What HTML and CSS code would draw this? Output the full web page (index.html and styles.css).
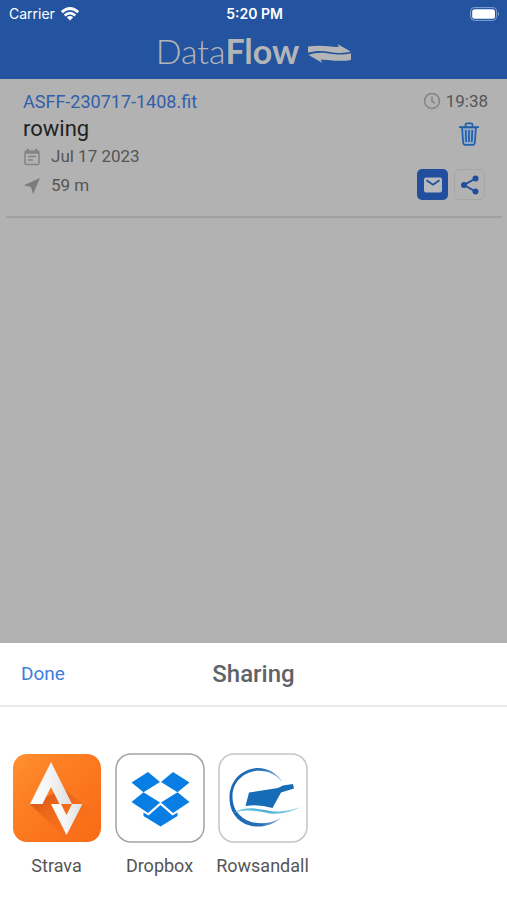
FILE: index.html
```html
<!DOCTYPE html>
<html lang="en">
<head>
<meta charset="utf-8">
<meta name="viewport" content="width=device-width, initial-scale=1">
<title>DataFlow</title>
<link rel="stylesheet" href="styles.css">
</head>
<body>
<header class="top">
  <div class="status">
    <div class="carrier">Carrier
      <svg width="18" height="14" viewBox="0 0 18 14" fill="none" stroke="#fff" stroke-width="2.7"><path d="M.8 5.200Q9-2.200 17.200 5.200M3.700 8.500Q9 3.700 14.300 8.500"/><path d="M9 13.600L5.800 10.300Q9 7.600 12.200 10.300Z" fill="#fff" stroke="none"/></svg>
    </div>
    <div class="clock">5:20 PM</div>
    <div class="power">
      <svg width="30" height="14" viewBox="0 0 30 14"><rect x=".6" y=".6" width="26" height="12.800" rx="4" fill="none" stroke="#86a4d2"/><rect x="2.200" y="2.200" width="22.800" height="9.600" rx="2.500" fill="#fff"/><path d="M28 4.800q2 2.200 0 4.400z" fill="#86a4d2"/></svg>
    </div>
  </div>
  <h1 class="brand"><span>Data<b>Flow</b></span>
    <svg width="43" height="19" viewBox="0 0 43 19" fill="#b4b5b7"><path d="M0 2.600C8 1.200 16 1.600 23 2.600Q27 3.200 31 2.800L29.500 0L42.500 7.600C36 9.800 28 9 22 8C14 6.600 7 6.600 0 8.800Z"/><path d="M43 9.200V16C35 17.400 27 16.800 20 15.900Q16 15.500 12.500 15.800L14.500 18.900L.5 11C7 8.400 14 8.200 21 9.400C28 10.600 36 11.200 43 9.200Z"/></svg>
  </h1>
</header>

<main class="page">
  <article class="activity">
    <div class="details">
      <a class="file" href="#">ASFF-230717-1408.fit</a>
      <h2 class="sport">rowing</h2>
      <p class="meta">
        <svg width="18" height="18" viewBox="0 0 18 18" fill="none" stroke="#838383" stroke-width="1.500"><rect x="2" y="3" width="14" height="13.500" rx="1.500"/><path d="M2 4.800h14M5 .8v3M13 .8v3" stroke-width="2"/><path d="M5 8.500h8M5 12h5"/></svg>
        Jul 17 2023</p>
      <p class="meta">
        <svg width="18" height="18" viewBox="0 0 18 18" fill="#7c7c7c"><path d="M17 1L.8 8.300L8 10L10 17.300Z"/></svg>
        59 m</p>
    </div>
    <div class="side">
      <p class="time">
        <svg width="18" height="18" viewBox="0 0 18 18" fill="none" stroke="#838383" stroke-width="1.500"><circle cx="9" cy="9" r="7.500"/><path d="M9 4.500V9.300L12.200 11.200"/></svg>
        19:38</p>
      <button class="trash" aria-label="Delete">
        <svg width="20" height="24" viewBox="0 0 20 24" fill="none" stroke="#2160ac" stroke-width="1.700"><path d="M3 5.500L4.200 21Q4.400 22.800 6 22.800H14Q15.600 22.800 15.800 21L17 5.500Z" fill="#91aac8"/><path d="M0 5.200H20M6.500 5V2.700Q6.500 1.400 8 1.400H12Q13.500 1.400 13.500 2.700V5M10 8V20M6.700 8L7.200 20M13.300 8L12.800 20"/></svg>
      </button>
      <div class="actions">
        <button class="square mail" aria-label="Email">
          <svg width="20" height="16" viewBox="0 0 20 16"><rect x="1" y=".5" width="18" height="15" rx="2" fill="#b7b9bd"/><path d="M3.500 3.200L10 7.700L16.500 3.200" fill="none" stroke="#214f9d" stroke-width="1.800"/></svg>
        </button>
        <button class="square share" aria-label="Share">
          <svg width="20" height="20" viewBox="0 0 20 20" fill="#214f9d"><path d="M15.500 3.500L4 10L15.500 16.500" fill="none" stroke="#214f9d" stroke-width="2"/><circle cx="15.500" cy="3.500" r="3"/><circle cx="4" cy="10" r="3"/><circle cx="15.500" cy="16.500" r="3"/></svg>
        </button>
      </div>
    </div>
  </article>
</main>

<section class="sheet" aria-labelledby="sheet-title">
  <div class="sheet-head">
    <button class="done">Done</button>
    <h2 class="sheet-title" id="sheet-title">Sharing</h2>
  </div>
  <div class="apps">
    <button class="app">
      <svg width="90" height="90" viewBox="0 0 90 90"><defs><linearGradient id="orange" x1="0" y1="0" x2="1" y2="1"><stop offset="0" stop-color="#ff9130"/><stop offset=".4" stop-color="#fc7c22"/><stop offset="1" stop-color="#fa6a16"/></linearGradient><linearGradient id="cast" x1="0" y1="0" x2="1" y2="1"><stop offset=".1" stop-color="#c94a12" stop-opacity=".75"/><stop offset=".8" stop-color="#f96a17" stop-opacity="0"/></linearGradient><linearGradient id="silver" x1="0" x2="1"><stop offset="0" stop-color="#fff"/><stop offset=".5" stop-color="#f4f4f4"/><stop offset="1" stop-color="#ddd"/></linearGradient></defs><rect x="1" y="1" width="88" height="88" rx="14" fill="url(#orange)"/><path d="M18 51L49 81L58 88H75L89 74V66L71 51L52 36Z" fill="url(#cast)"/><path d="M18 51L39 9L60 51H47.500L39 34L30.500 51Z" fill="url(#silver)"/><path d="M39 51H49L54.500 62L60 51H70.500L54.500 82Z" fill="url(#silver)"/></svg>
      <span>Strava</span>
    </button>
    <button class="app">
      <svg width="90" height="90" viewBox="0 0 90 90"><rect x="1" y="1" width="88" height="88" rx="15" fill="#fff" stroke="#a5a5a5" stroke-width="1.500"/><g fill="#087ee5"><path d="M33 19L45 29L28.500 39.200L16.500 29.500Z"/><path d="M58 19L46 29L62.500 39.200L74.500 29.500Z"/><path d="M28.500 39.200L45 49.500L33 60L16.500 49Z"/><path d="M62.500 39.200L74.500 49L58 60L46 49.500Z"/><path d="M28.500 59.500L33.500 62.500L45.500 52L57.500 62.500L62.500 59.500V63L45.500 73.500L28.500 63Z"/></g></svg>
      <span>Dropbox</span>
    </button>
    <button class="app">
      <svg width="90" height="90" viewBox="0 0 90 90"><defs><linearGradient id="ring" x1="0" x2="1"><stop offset="0" stop-color="#1865b4"/><stop offset=".6" stop-color="#2872b9"/><stop offset="1" stop-color="#9ebedf"/></linearGradient><linearGradient id="wave" x1="0" x2="1"><stop offset="0" stop-color="#79cce7"/><stop offset=".5" stop-color="#4caed5"/><stop offset="1" stop-color="#a5dceb"/></linearGradient></defs><rect x="1" y="1" width="88" height="88" rx="15" fill="#fff" stroke="#c5c5c5" stroke-width="1.500"/><path d="M65 30C50 4 12 14 11.500 44C11 73 43 82 63 65C42 77 14 68 14.500 43C15 18 48 8 65 30Z" fill="url(#ring)"/><path d="M31 39.500L60 35L65 32.500L75 31L76 35.500L63 39.500L54.500 55Q41 51 27.500 53Z" fill="#176cb8"/><path d="M15 60C32 50 47 59 61 58.500Q72 58 83 54Q68 62 52 60.500C35 57 27 56 15 60Z" fill="url(#wave)"/></svg>
      <span>Rowsandall</span>
    </button>
  </div>
</section>
</body>
</html>
```
FILE: styles.css
```css
* {
  box-sizing: border-box;
}

body {
  margin: 0;
  min-height: 100vh;
  display: flex;
  flex-direction: column;
  background: #b2b2b2;
  color: #555;
  font: 18px/28px Roboto, "Liberation Sans", sans-serif;
}

h1, h2, p {
  margin: 0;
}

svg {
  display: block;
  flex: none;
}

button {
  padding: 0;
  border: 0;
  background: none;
  color: inherit;
  font: inherit;
}

.top {
  padding-bottom: 8px;
  background: #24549f;
  color: #fff;
}

.status {
  display: grid;
  grid-template-columns: 1fr auto 1fr;
  align-items: center;
  padding: 0 7px 0 9px;
  font: 14px/28px Inter, sans-serif;
}

.carrier {
  display: flex;
  align-items: center;
  gap: 6px;
}

.clock {
  font-weight: 600;
}

.power {
  justify-self: end;
}

.brand {
  display: flex;
  justify-content: center;
  align-items: center;
  gap: 9px;
  padding-top: 3px;
  color: #b4b5b7;
  font: 300 34px/40px Lato, sans-serif;
}

.brand b {
  font-weight: 700;
}

.brand svg {
  margin-top: 4px;
}

.page {
  flex: 1;
  padding: 0 5px 0 6px;
}

.activity {
  display: flex;
  justify-content: space-between;
  padding: 9px 14px 16px 17px;
  border-bottom: 2px solid #a0a0a0;
}

.file {
  display: block;
  color: #315faa;
  text-decoration: none;
}

.sport {
  color: #222;
  font-size: 22px;
  font-weight: 400;
  line-height: 26px;
}

.meta,
.time {
  display: flex;
  align-items: center;
  font-size: 17px;
}

.meta {
  gap: 10px;
  line-height: 29px;
}

.side {
  display: flex;
  flex-direction: column;
  align-items: flex-end;
}

.time {
  gap: 5px;
  line-height: 26px;
}

.trash {
  margin: 8px 9px 0 0;
}

.actions {
  display: flex;
  gap: 6px;
  margin: auto 3px 0 0;
}

.square {
  display: grid;
  place-items: center;
  width: 31px;
  height: 31px;
  border-radius: 5px;
}

.mail {
  background: #214f9d;
}

.share {
  border: 1px solid #a6a6a6;
}

.sheet {
  background: #fff;
}

.sheet-head {
  display: grid;
  grid-template-columns: 1fr auto 1fr;
  align-items: center;
  min-height: 64px;
  padding: 0 21px;
  border-bottom: 2px solid #e8e8e8;
}

.done {
  justify-self: start;
  color: #3c7de0;
  font-size: 19px;
}

.sheet-title {
  color: #5f6368;
  font-size: 24px;
  font-weight: 500;
}

.apps {
  display: flex;
  flex-wrap: wrap;
  padding: 46px 5px 20px;
}

.app {
  display: flex;
  flex-direction: column;
  align-items: center;
  gap: 9px;
  width: 103px;
}
```
